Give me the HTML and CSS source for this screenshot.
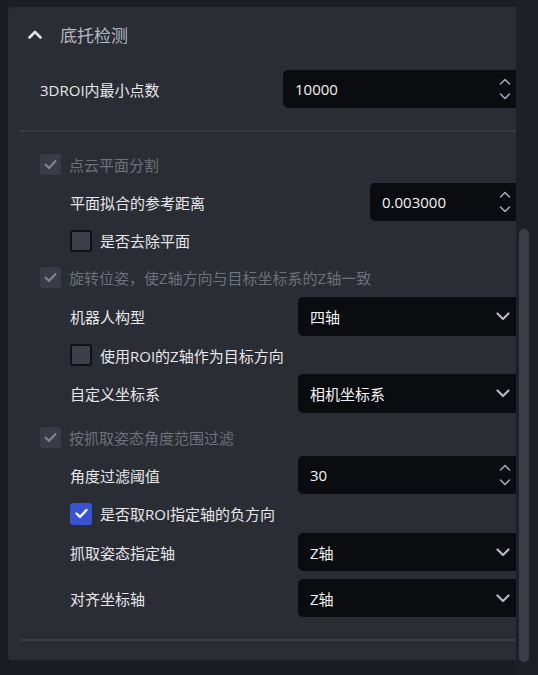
FILE: index.html
```html
<!DOCTYPE html>
<html lang="zh">
<head>
<meta charset="utf-8">
<title>底托检测</title>
<link rel="stylesheet" href="styles.css">
</head>
<body>
<div class="page">
  <div class="view">
    <section class="panel">
      <header class="head">
        <svg class="collapse" width="14" height="9" viewBox="0 0 14 9"><polyline points="1.5,7.5 7,2 12.5,7.5" fill="none" stroke="#e2e3e6" stroke-width="2.6" stroke-linecap="round" stroke-linejoin="round"/></svg>
        <span class="title">底托检测</span>
      </header>

      <div class="row r-first">
        <span class="lbl w-first">3DROI内最小点数</span>
        <div class="field"><span class="val">10000</span>
          <svg class="spin" width="12" height="24" viewBox="0 0 12 24"><polyline points="1.5,7 6,2.5 10.5,7" fill="none" stroke="#a3a5ad" stroke-width="1.6" stroke-linecap="round" stroke-linejoin="round"/><polyline points="1.5,17 6,21.5 10.5,17" fill="none" stroke="#a3a5ad" stroke-width="1.6" stroke-linecap="round" stroke-linejoin="round"/></svg>
        </div>
      </div>

      <div class="sep sep-top"></div>

      <div class="body">
        <div class="row r-dis1">
          <span class="cb dis"><svg width="21" height="21" viewBox="0 0 21 21"><polyline points="5.5,10.5 9,14 15.5,7" fill="none" stroke="#858892" stroke-width="2" stroke-linecap="round" stroke-linejoin="round"/></svg></span>
          <span class="lbl dim">点云平面分割</span>
        </div>
        <div class="row sub">
          <span class="lbl w-wide">平面拟合的参考距离</span>
          <div class="field"><span class="val">0.003000</span>
            <svg class="spin" width="12" height="24" viewBox="0 0 12 24"><polyline points="1.5,7 6,2.5 10.5,7" fill="none" stroke="#a3a5ad" stroke-width="1.6" stroke-linecap="round" stroke-linejoin="round"/><polyline points="1.5,17 6,21.5 10.5,17" fill="none" stroke="#a3a5ad" stroke-width="1.6" stroke-linecap="round" stroke-linejoin="round"/></svg>
          </div>
        </div>
        <div class="row sub r-chk">
          <span class="cb off"></span>
          <span class="lbl">是否去除平面</span>
        </div>

        <div class="row r-dis2">
          <span class="cb dis"><svg width="21" height="21" viewBox="0 0 21 21"><polyline points="5.5,10.5 9,14 15.5,7" fill="none" stroke="#858892" stroke-width="2" stroke-linecap="round" stroke-linejoin="round"/></svg></span>
          <span class="lbl dim">旋转位姿，使Z轴方向与目标坐标系的Z轴一致</span>
        </div>
        <div class="row sub r-sel">
          <span class="lbl w-std">机器人构型</span>
          <div class="field"><span class="val">四轴</span>
            <svg class="drop" width="14" height="9" viewBox="0 0 14 9"><polyline points="1.5,1.5 7,7 12.5,1.5" fill="none" stroke="#b6b8bf" stroke-width="2.2" stroke-linecap="round" stroke-linejoin="round"/></svg>
          </div>
        </div>
        <div class="row sub r-chk2">
          <span class="cb off"></span>
          <span class="lbl">使用ROI的Z轴作为目标方向</span>
        </div>
        <div class="row sub r-sel">
          <span class="lbl w-std">自定义坐标系</span>
          <div class="field"><span class="val">相机坐标系</span>
            <svg class="drop" width="14" height="9" viewBox="0 0 14 9"><polyline points="1.5,1.5 7,7 12.5,1.5" fill="none" stroke="#b6b8bf" stroke-width="2.2" stroke-linecap="round" stroke-linejoin="round"/></svg>
          </div>
        </div>

        <div class="row r-dis3">
          <span class="cb dis"><svg width="21" height="21" viewBox="0 0 21 21"><polyline points="5.5,10.5 9,14 15.5,7" fill="none" stroke="#858892" stroke-width="2" stroke-linecap="round" stroke-linejoin="round"/></svg></span>
          <span class="lbl dim">按抓取姿态角度范围过滤</span>
        </div>
        <div class="row sub">
          <span class="lbl w-std">角度过滤阈值</span>
          <div class="field"><span class="val">30</span>
            <svg class="spin" width="12" height="24" viewBox="0 0 12 24"><polyline points="1.5,7 6,2.5 10.5,7" fill="none" stroke="#a3a5ad" stroke-width="1.6" stroke-linecap="round" stroke-linejoin="round"/><polyline points="1.5,17 6,21.5 10.5,17" fill="none" stroke="#a3a5ad" stroke-width="1.6" stroke-linecap="round" stroke-linejoin="round"/></svg>
          </div>
        </div>
        <div class="row sub r-chk">
          <span class="cb on"><svg width="21" height="21" viewBox="0 0 21 21"><polyline points="5.5,10.5 9,14 15.5,7" fill="none" stroke="#ffffff" stroke-width="2.4" stroke-linecap="round" stroke-linejoin="round"/></svg></span>
          <span class="lbl">是否取ROI指定轴的负方向</span>
        </div>
        <div class="row sub">
          <span class="lbl w-std">抓取姿态指定轴</span>
          <div class="field"><span class="val">Z轴</span>
            <svg class="drop" width="14" height="9" viewBox="0 0 14 9"><polyline points="1.5,1.5 7,7 12.5,1.5" fill="none" stroke="#b6b8bf" stroke-width="2.2" stroke-linecap="round" stroke-linejoin="round"/></svg>
          </div>
        </div>
        <div class="row sub r-last">
          <span class="lbl w-std">对齐坐标轴</span>
          <div class="field"><span class="val">Z轴</span>
            <svg class="drop" width="14" height="9" viewBox="0 0 14 9"><polyline points="1.5,1.5 7,7 12.5,1.5" fill="none" stroke="#b6b8bf" stroke-width="2.2" stroke-linecap="round" stroke-linejoin="round"/></svg>
          </div>
        </div>
      </div>

      <div class="sep sep-bottom"></div>
    </section>
  </div>
  <div class="track"><div class="thumb"></div></div>
</div>
</body>
</html>
```

FILE: styles.css
```css
* { box-sizing: border-box; }

html, body {
  margin: 0;
  padding: 0;
  background: #1c1d22;
  width: 538px;
  height: 675px;
  overflow: hidden;
  font-family: "Open Sans", "Noto Sans CJK SC", sans-serif;
}

.page {
  display: flex;
  height: 675px;
}

.view {
  width: 516px;
  padding: 7px 0 0 8px;
}

.panel {
  height: 653px;
  background: #2b2d35;
  border-radius: 4px 0 0 4px;
  display: flex;
  flex-direction: column;
}

.head {
  height: 54px;
  display: flex;
  align-items: center;
  padding-left: 20px;
}

.collapse { flex: none; }

.title {
  margin-left: 18px;
  font-size: 17px;
  color: #b3b7c1;
}

.row {
  display: flex;
  align-items: center;
  height: 38px;
  padding-left: 32px;
}

.r-first { margin-top: 9px; }

.sep {
  height: 2px;
  background: #393b43;
  margin-left: 12px;
}

.sep-top { margin-top: 22px; }
.sep-bottom { margin-top: 22px; }

.r-dis1 { margin-top: 13px; }
.r-chk { height: 39px; }
.r-chk2 { height: 38px; }
.r-dis2 { height: 37px; padding-bottom: 3px; }
.r-sel { height: 39px; }
.r-dis3 { margin-top: 5px; }
.r-last { margin-top: 8px; }

.sub { padding-left: 62px; }

.lbl {
  font-size: 15px;
  color: #e7e7ea;
  white-space: nowrap;
}

.lbl.dim { color: #6e717a; }

.w-first { width: 243px; flex: none; }
.w-wide { width: 300px; flex: none; }
.w-std { width: 228px; flex: none; }

.field {
  flex: 1;
  align-self: stretch;
  display: flex;
  align-items: center;
  background: #0b0c10;
  border-radius: 5px 0 0 5px;
  padding-left: 12px;
}

.val {
  font-size: 15px;
  color: #f2f2f4;
}

.spin {
  margin-left: auto;
  margin-right: 5px;
}

.drop {
  margin-left: auto;
  margin-right: 6px;
}

.cb {
  flex: none;
  width: 21px;
  height: 21px;
  border-radius: 3px;
  margin-right: 8px;
  display: flex;
}

.cb.dis { background: #393b46; }

.cb.off {
  width: 22px;
  height: 22px;
  background: #3d3f4b;
  border: 2px solid #101115;
}

.cb.on {
  width: 22px;
  height: 22px;
  background: #3653d6;
  padding: 0.5px;
}

.track {
  width: 22px;
  height: 675px;
  background: #1f2025;
  padding: 229px 0 0 3px;
}

.thumb {
  width: 10px;
  height: 433px;
  border-radius: 5px;
  background: #3c3e47;
}
```
